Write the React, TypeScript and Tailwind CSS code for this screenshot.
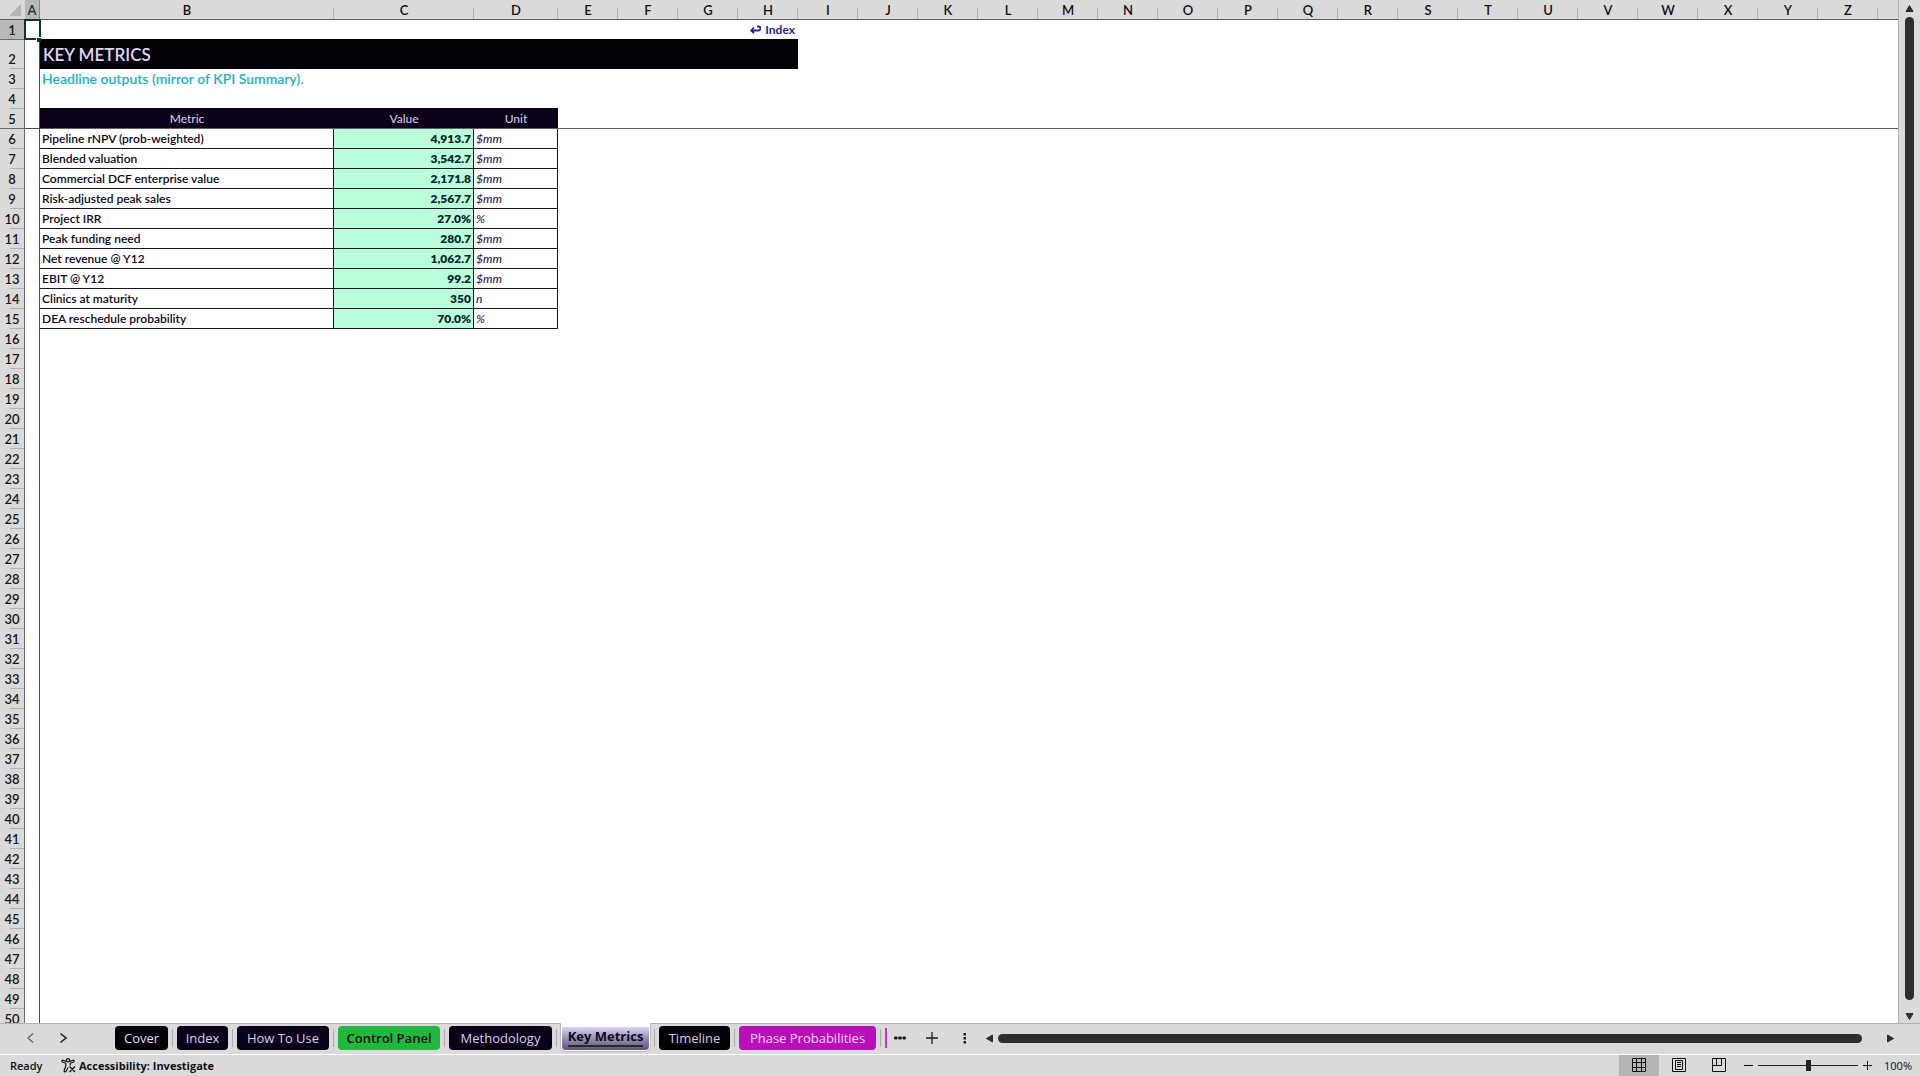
import React from "react";

const columns = "ABCDEFGHIJKLMNOPQRSTUVWXYZ".split("");
const rowNumbers = Array.from({ length: 50 }, (_, i) => i + 1);

const metrics = [
  { name: "Pipeline rNPV (prob-weighted)", value: "4,913.7", unit: "$mm" },
  { name: "Blended valuation", value: "3,542.7", unit: "$mm" },
  { name: "Commercial DCF enterprise value", value: "2,171.8", unit: "$mm" },
  { name: "Risk-adjusted peak sales", value: "2,567.7", unit: "$mm" },
  { name: "Project IRR", value: "27.0%", unit: "%" },
  { name: "Peak funding need", value: "280.7", unit: "$mm" },
  { name: "Net revenue @ Y12", value: "1,062.7", unit: "$mm" },
  { name: "EBIT @ Y12", value: "99.2", unit: "$mm" },
  { name: "Clinics at maturity", value: "350", unit: "n" },
  { name: "DEA reschedule probability", value: "70.0%", unit: "%" },
];

const tabs = [
  { name: "Cover", style: "w-[53px] bg-[#030008] text-[#e9dcf5]" },
  { name: "Index", style: "w-[51px] bg-[#0a0018] text-[#dccdf0]" },
  { name: "How To Use", style: "w-[92px] bg-[#0a0018] text-[#dccdf0]" },
  { name: "Control Panel", style: "w-[102px] bg-[#22b840] text-[#04140a] font-semibold" },
  { name: "Methodology", style: "w-[103px] bg-[#0a0018] text-[#dccdf0]" },
  { name: "Key Metrics", style: "" },
  { name: "Timeline", style: "w-[71px] bg-[#030008] text-[#d5cbe0]" },
  { name: "Phase Probabilities", style: "w-[137px] bg-[#b80fb8] text-[#ffd6ff]" },
];

function Triangle({ points }: { points: string }) {
  return (
    <svg viewBox="0 0 9 9" className="h-[9px] w-[9px]" fill="#2e2e2e" stroke="#2e2e2e" strokeLinejoin="round" aria-hidden="true">
      <polygon points={points} />
    </svg>
  );
}

function ColumnHeads() {
  return (
    <tr>
      <th className="relative h-[20px] border-b border-[#5f5f5f] bg-[#dadada]">
        <svg viewBox="0 0 12 12" className="absolute right-1 top-1 h-3 w-3" aria-hidden="true">
          <path d="M12 0V12H0Z" fill="#b4b4b4" />
        </svg>
      </th>
      {columns.map((c) => (
        <th
          key={c}
          scope="col"
          className={
            c === "A"
              ? "h-[20px] border-b border-r border-b-[#0b3a1c] border-r-[#8a8a8a] bg-[#b9b9b9] pt-px text-[13px] leading-[16px] font-semibold text-[#0b3a1c]"
              : "relative h-[20px] border-b border-[#5f5f5f] bg-[#dadada] pt-px text-[13px] leading-[16px] font-semibold text-[#111] after:absolute after:right-0 after:bottom-0 after:h-[11px] after:w-px after:bg-[#b2b2b2]"
          }
        >
          {c}
        </th>
      ))}
      <th className="h-[20px] border-b border-[#5f5f5f] bg-[#dadada]" />
    </tr>
  );
}

function RowHead({ n }: { n: number }) {
  const base = "relative border-r border-[#6a6a6a] px-0 text-center text-[13px] leading-[17px] font-semibold text-[#161616] align-bottom ";
  if (n === 1) return <th scope="row" className={base + "h-[20px] border-b bg-[#b9b9b9]"}>1</th>;
  if (n === 5) return <th scope="row" className={base + "h-[20px] border-b bg-[#dadada]"}>5</th>;
  return (
    <th
      scope="row"
      className={
        base +
        (n === 2 ? "h-[29px] " : "h-[20px] ") +
        "bg-[#dadada] pb-px after:absolute after:right-0 after:bottom-0 after:h-px after:w-[14px] after:bg-[#b2b2b2]"
      }
    >
      {n}
    </th>
  );
}

function Row({ n }: { n: number }) {
  const cells: React.ReactNode[] = [];
  const metric = metrics[n - 6];
  let rest = 26;
  if (n === 1) {
    cells.push(
      <td key="b" colSpan={7} className="border-b border-[#030008] pr-[3px] text-right text-[12px] leading-[17px] font-bold text-[#2a2299]">
        <a href="#index" className="inline-flex items-center gap-1">
          <svg viewBox="0 0 11 9" className="h-[9px] w-[11px]" fill="none" stroke="currentColor" strokeWidth="1.8" aria-hidden="true">
            <path d="M7 1.5H8.5A2 2 0 0 1 8.500 5.500H1.500M4 2.500L1.200 5.500L4 8" />
          </svg>
          Index
        </a>
      </td>
    );
    rest = 19;
  } else if (n === 2) {
    cells.push(
      <td key="b" colSpan={7} className="bg-[#030008] pl-[3px] text-[17px] leading-[22px] font-semibold text-[#dcd6f5]">
        KEY METRICS
      </td>
    );
    rest = 19;
  } else if (n === 3) {
    cells.push(
      <td key="b" colSpan={3} className="pl-[2px] text-[14px] leading-[18px] font-semibold text-[#18b3bd]">
        Headline outputs (mirror of KPI Summary).
      </td>
    );
    rest = 23;
  } else if (n === 4) {
    cells.push(<td key="b" colSpan={3} className="border-b border-[#0a0018]" />);
    rest = 23;
  } else if (n === 5) {
    ["Metric", "Value", "Unit"].forEach((label) =>
      cells.push(
        <th key={label} scope="col" className="border-b border-[#5f5f5f] bg-[#0a0018] text-[12px] leading-[17px] font-medium text-[#cfc8e6]">
          {label}
        </th>
      )
    );
    rest = 23;
  } else if (metric) {
    cells.push(
      <td key="b" className="border-r border-b border-[#1a0f38] pl-[2px] text-[12px] leading-[17px] font-semibold text-[#0c0820]">{metric.name}</td>,
      <td key="c" className="border-r border-b border-[#1a0f38] bg-[#baffda] pr-[2px] text-right text-[12px] leading-[17px] font-extrabold text-[#0a2430]">{metric.value}</td>,
      <td key="d" className="border-r border-b border-[#1a0f38] pl-[2px] text-[12px] leading-[17px] font-medium italic text-[#2c2450]">{metric.unit}</td>
    );
    rest = 23;
  } else {
    cells.push(<td key="b" colSpan={3} />);
    rest = 23;
  }
  return (
    <tr>
      <RowHead n={n} />
      <td
        className={
          n === 1
            ? "relative border-r border-[#4c4c4c] before:absolute before:-top-px before:-left-px before:h-[21px] before:w-[17px] before:border-2 before:border-[#0b3a1c] after:absolute after:-right-[2px] after:-bottom-[2px] after:h-[5px] after:w-[5px] after:border-t after:border-l after:border-white after:bg-[#0b3a1c]"
            : n === 5
              ? "border-r border-b border-[#4c4c4c]"
              : "border-r border-[#4c4c4c]"
        }
      />
      {cells}
      <td colSpan={rest} className={n === 5 ? "border-b border-[#5f5f5f]" : ""} />
    </tr>
  );
}

function Sheet() {
  return (
    <div className="min-w-0 flex-1 overflow-hidden border-r border-[#b2b2b2] bg-white">
      <table className="w-full table-fixed border-separate border-spacing-0">
        <colgroup>
          <col className="w-[25px]" />
          <col className="w-[15px]" />
          <col className="w-[294px]" />
          <col className="w-[140px]" />
          <col className="w-[84px]" />
          {columns.slice(4).map((c) => (
            <col key={c} className="w-[60px]" />
          ))}
          <col />
        </colgroup>
        <thead>
          <ColumnHeads />
        </thead>
        <tbody>
          {rowNumbers.map((n) => (
            <Row key={n} n={n} />
          ))}
        </tbody>
      </table>
    </div>
  );
}

function Separator() {
  return <span className="mx-1 h-[18px] w-px shrink-0 bg-[#ababab]" />;
}

function TabBar() {
  return (
    <div className="flex h-[31px] shrink-0 items-start border-t border-[#b2b2b2]">
      <div className="flex h-7 w-[115px] shrink-0 items-center gap-5 pl-[26px] text-[#222]">
        <button aria-label="Previous sheets" className="text-[#666]">
          <svg viewBox="0 0 12 12" className="h-3 w-3" fill="none" stroke="currentColor" strokeWidth="1.4" aria-hidden="true"><path d="M7 1.500L2 6L7 10.500" /></svg>
        </button>
        <button aria-label="Next sheets">
          <svg viewBox="0 0 12 12" className="h-3 w-3" fill="none" stroke="currentColor" strokeWidth="1.600" aria-hidden="true"><path d="M2.500 1.500L8 6L2.500 10.500" /></svg>
        </button>
      </div>
      <nav aria-label="Sheets" className="flex h-7 items-center">
        {tabs.map((t) => (
          <React.Fragment key={t.name}>
            {t.name === "Key Metrics" ? (
              <button className="-mx-px -mt-[2px] h-[29px] w-[91px] rounded-b-md border-x border-b border-[#bdbdbd] bg-white px-px pt-[4px] pb-px">
                <span className="flex h-full flex-col items-center rounded-b bg-linear-to-b from-[#d9d6f8] via-[#9a8fb4] to-[#6d4a80] text-[13px] leading-[17px] font-bold text-[#100c18]">
                  <span className="border-b-2 border-[#0b3a1c] leading-[18px]">{t.name}</span>
                </span>
              </button>
            ) : (
              <button className={"h-6 shrink-0 rounded text-[13px] leading-[22px] whitespace-nowrap " + t.style}>{t.name}</button>
            )}
            <Separator />
          </React.Fragment>
        ))}
        <span className="h-5 w-[2px] bg-[#d631c4]" />
      </nav>
      <div className="flex h-7 min-w-0 flex-1 items-center text-[#1c1c1c]">
        <button aria-label="All sheets" className="ml-[7px]">
          <svg viewBox="0 0 12 4" className="h-1 w-3" fill="currentColor" aria-hidden="true"><rect y=".5" width="3.500" height="3" rx="1" /><rect x="4.200" y=".5" width="3.500" height="3" rx="1" /><rect x="8.400" y=".5" width="3.500" height="3" rx="1" /></svg>
        </button>
        <button aria-label="New sheet" className="ml-5">
          <svg viewBox="0 0 12 12" className="h-3 w-3" stroke="currentColor" strokeWidth="1.300" aria-hidden="true"><path d="M6 0V12M0 6H12" /></svg>
        </button>
        <button aria-label="Resize tabs" className="ml-[25px]">
          <svg viewBox="0 0 4 12" className="h-3 w-1" fill="currentColor" aria-hidden="true"><rect x=".5" y="1" width="2.500" height="2.500" /><rect x=".5" y="5" width="2.500" height="2.500" /><rect x=".5" y="9" width="2.500" height="2.500" /></svg>
        </button>
        <button aria-label="Scroll left" className="ml-[18px]"><Triangle points="7.500,1 7.500,8 1.500,4.500" /></button>
        <div role="scrollbar" aria-label="Horizontal scroll" aria-orientation="horizontal" aria-controls="root" aria-valuenow={0} className="ml-1 h-[9px] min-w-0 flex-1 rounded-full bg-[#2e2e2e]" />
        <button aria-label="Scroll right" className="mr-[25px] ml-[24px]"><Triangle points="1.500,1 1.500,8 7.500,4.500" /></button>
      </div>
    </div>
  );
}

function StatusBar() {
  return (
    <footer className="flex h-[22px] shrink-0 items-center border-t border-white text-[11px] leading-[16px] text-[#111]">
      <span className="ml-[10px] w-[51px] pt-px font-semibold">Ready</span>
      <button className="flex items-center gap-[3px] font-bold">
        <svg viewBox="0 0 15 15" className="h-[15px] w-[15px]" fill="none" stroke="currentColor" strokeWidth="1.200" strokeLinejoin="round" aria-hidden="true">
          <circle cx="7" cy="2.300" r="1.600" />
          <path d="M5.400 3.400L2 2.200C.7 1.900.4 3.600 1.500 4L4.800 5.300V8L3.200 12.500C2.900 14 4.700 14.400 5.200 13.200L7 9.500M8.600 3.400L12 2.200C13.300 1.900 13.600 3.600 12.500 4L9.300 5.300V7.500M8.500 8.500L14 14M14 8.500L8.500 14" />
        </svg>
        Accessibility: Investigate
      </button>
      <div className="ml-auto flex h-full items-center">
        <button aria-label="Normal view" className="flex h-full w-10 items-center justify-center bg-[#b5b5b5]">
          <svg viewBox="0 0 14 14" className="mb-[2px] h-[14px] w-[14px]" fill="none" stroke="#111" aria-hidden="true"><path d="M.5.5H13.500V13.500H.5ZM4.500 .5V13.500M9.500 .5V13.500M.5 4.500H13.500M.5 9.500H13.500" /></svg>
        </button>
        <button aria-label="Page layout view" className="flex h-full w-10 items-center justify-center">
          <svg viewBox="0 0 14 14" className="mb-[2px] h-[14px] w-[14px]" fill="none" stroke="#111" aria-hidden="true"><path d="M.5.5H13.500V13.500H.5ZM3.500 2.500H10.500V11.500H3.500ZM5 4.500H9M5 6.500H9M5 8.500H9" /></svg>
        </button>
        <button aria-label="Page break preview" className="flex h-full w-10 items-center justify-center">
          <svg viewBox="0 0 14 14" className="mb-[2px] h-[14px] w-[14px]" fill="none" stroke="#111" aria-hidden="true"><path d="M.5.5H13.500V13.500H.5ZM.5 7.500H9.500V.5M4.500 .5V7.500" /></svg>
        </button>
        <button aria-label="Zoom out" className="ml-[5px]"><svg viewBox="0 0 9 9" className="h-[9px] w-[9px]" stroke="#111" aria-hidden="true"><path d="M0 4.500H9" /></svg></button>
        <input
          type="range"
          aria-label="Zoom"
          defaultValue={50}
          className="mx-[5px] h-3 w-[100px] appearance-none bg-transparent [&::-webkit-slider-runnable-track]:h-px [&::-webkit-slider-runnable-track]:bg-[#222] [&::-webkit-slider-thumb]:-mt-[5px] [&::-webkit-slider-thumb]:h-[11px] [&::-webkit-slider-thumb]:w-[5px] [&::-webkit-slider-thumb]:appearance-none [&::-webkit-slider-thumb]:bg-[#222]"
        />
        <button aria-label="Zoom in"><svg viewBox="0 0 9 9" className="h-[9px] w-[9px]" stroke="#111" aria-hidden="true"><path d="M0 4.500H9M4.500 0V9" /></svg></button>
        <button className="mr-2 w-10 text-right font-medium">100%</button>
      </div>
    </footer>
  );
}

export default function App() {
  return (
    <div className="flex h-screen flex-col overflow-hidden bg-[#dadada] font-['Open_Sans',sans-serif]">
      <main className="flex min-h-0 flex-1 font-[Lato,sans-serif]">
        <Sheet />
        <div className="flex w-[21px] shrink-0 flex-col items-center pt-[4px] pb-[2px]">
          <button aria-label="Scroll up"><Triangle points="4.500,1.500 8,7.500 1,7.500" /></button>
          <div role="scrollbar" aria-label="Vertical scroll" aria-orientation="vertical" aria-controls="root" aria-valuenow={0} className="mt-1 mb-3 min-h-0 w-[9px] flex-1 rounded-full bg-[#2e2e2e]" />
          <button aria-label="Scroll down"><Triangle points="1,1.500 8,1.500 4.500,7.500" /></button>
        </div>
      </main>
      <TabBar />
      <StatusBar />
    </div>
  );
}
